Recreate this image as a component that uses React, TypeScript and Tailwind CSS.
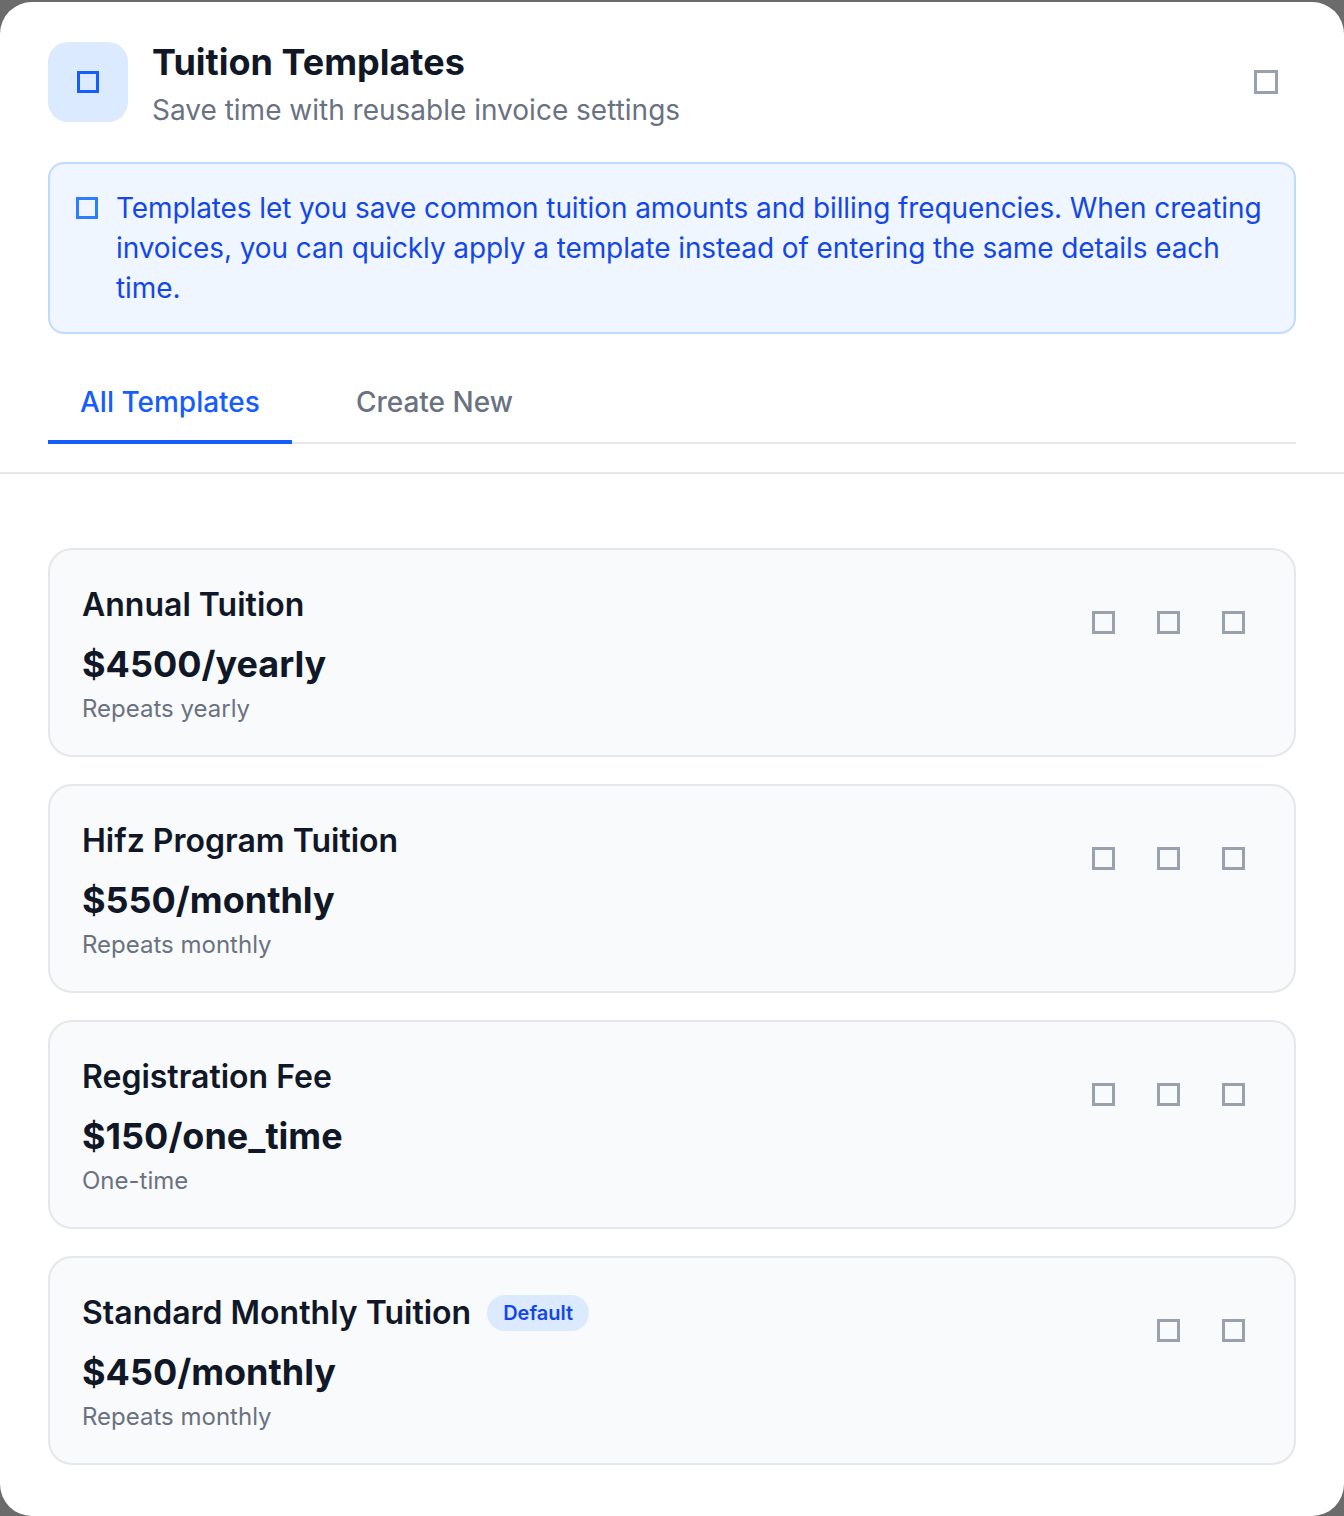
import { FC } from "react";

type Template = {
    name: string,
    price: string,
    note: string,
    isDefault?: boolean,
}

const templates: Template[] = [
    { name: "Annual Tuition", price: "$4500/yearly", note: "Repeats yearly" },
    { name: "Hifz Program Tuition", price: "$550/monthly", note: "Repeats monthly" },
    { name: "Registration Fee", price: "$150/one_time", note: "One-time" },
    { name: "Standard Monthly Tuition", price: "$450/monthly", note: "Repeats monthly", isDefault: true },
];

const Box: FC<{ className: string }> = ({ className }) => (
    <span className={`block shrink-0 ${className}`} />
);

const TemplateCard: FC<{ t: Template }> = ({ t }) => (
    <div className="flex items-start justify-between rounded-3xl border-2 border-gray-200 bg-gray-50 px-8 pt-[33px] pb-[30px]">
        <div className="flex flex-col">
            <div className="flex items-center gap-4">
                <h3 className="text-[32px] leading-[44px] font-semibold text-gray-900">{t.name}</h3>
                {t.isDefault && (
                    <span className="rounded-full bg-blue-100 px-4 py-[3px] text-[20px] leading-[30px] font-semibold text-blue-700">
                        Default
                    </span>
                )}
            </div>
            <p className="mt-[17px] text-[36px] leading-[40px] font-bold text-gray-900">{t.price}</p>
            <p className="mt-[9px] text-[24px] leading-[32px] text-gray-500">{t.note}</p>
        </div>
        <div className="mt-[28px] mr-[17px] flex items-center gap-[42px]">
            {!t.isDefault && <Box className="h-[23px] w-[23px] border-[3px] border-gray-400" />}
            <Box className="h-[23px] w-[23px] border-[3px] border-gray-400" />
            <Box className="h-[23px] w-[23px] border-[3px] border-gray-400" />
        </div>
    </div>
);

const App: FC = () => {
    return (
        <div className="h-[1516px] w-full bg-[#6b6b6b] pt-[2px] font-['Inter','Noto_Sans',sans-serif]">
            <div className="flex h-full flex-col overflow-hidden rounded-[32px] bg-white">
                <div className="border-b-2 border-gray-200 px-12 pt-[40px] pb-[28px]">
                    <div className="flex items-start">
                        <div className="flex h-20 w-20 shrink-0 items-center justify-center rounded-[20px] bg-blue-100">
                            <Box className="h-[22px] w-[22px] border-[3px] border-blue-600" />
                        </div>
                        <div className="-mt-[2px] ml-6 flex flex-col">
                            <h1 className="text-[36px] leading-[44px] font-bold text-gray-900">Tuition Templates</h1>
                            <p className="mt-[6px] text-[28px] leading-[40px] text-gray-500">Save time with reusable invoice settings</p>
                        </div>
                        <button className="mt-[28px] mr-[18px] ml-auto">
                            <Box className="h-6 w-6 border-[3px] border-gray-400" />
                        </button>
                    </div>

                    <div className="mt-[32px] flex items-start gap-[18px] rounded-2xl border-2 border-blue-200 bg-blue-50 py-6 pr-3 pl-[26px]">
                        <Box className="mt-[9px] h-[22px] w-[22px] border-[3px] border-blue-500" />
                        <p className="text-[28px] leading-[40px] tracking-[-0.1px] text-blue-700">
                            Templates let you save common tuition amounts and billing frequencies. When creating invoices, you can quickly apply a template instead of entering the same details each time.
                        </p>
                    </div>

                    <div className="mt-[48px] flex gap-[31px] border-b-2 border-gray-200">
                        <button className="-mb-[2px] border-b-4 border-blue-600 px-[32px] pb-[18px] text-[28px] leading-[40px] font-medium text-blue-600">
                            All Templates
                        </button>
                        <button className="px-[33px] pb-[20px] text-[28px] leading-[40px] font-medium text-gray-500">
                            Create New
                        </button>
                    </div>
                </div>

                <div className="flex flex-col gap-[27px] px-12 pt-[74px]">
                    {templates.map((t) => (
                        <TemplateCard key={t.name} t={t} />
                    ))}
                </div>
            </div>
        </div>
    );
};

export default App;
